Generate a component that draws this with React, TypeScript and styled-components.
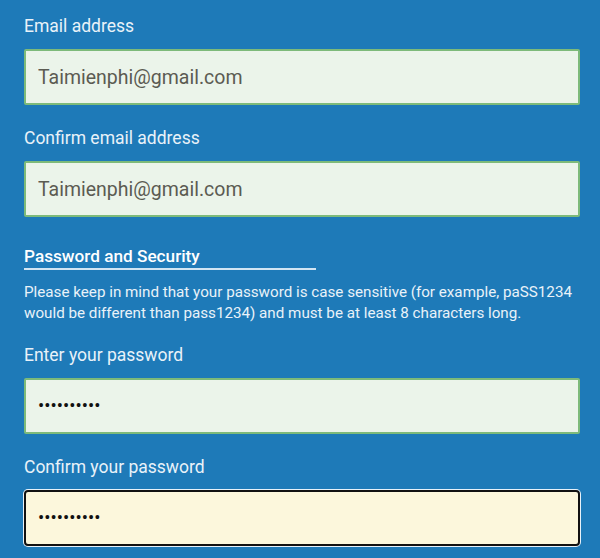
import React from "react";
import styled, { createGlobalStyle } from "styled-components";

const Global = createGlobalStyle`
  html, body { margin: 0; padding: 0; background: #1e7ab8; }
  body { font-family: Roboto, "Liberation Sans", sans-serif; }
`;

const Page = styled.div`
  width: 600px;
  height: 558px;
  overflow: hidden;
  background: #1e7ab8;
  padding: 14px 20px 0 24px;
  box-sizing: border-box;
  display: flex;
  flex-direction: column;
`;

const Field = styled.div`
  display: flex;
  flex-direction: column;
  margin-bottom: 21px;
`;

const Label = styled.label`
  font-size: 17.5px;
  font-weight: 400;
  line-height: 24px;
  color: #e9f2f9;
  margin-bottom: 11px;
`;

const Input = styled.input<{ $focused?: boolean }>`
  box-sizing: border-box;
  width: 556px;
  height: 56px;
  padding: 0 12px;
  font-family: Roboto, "Liberation Sans", sans-serif;
  font-weight: 400;
  font-size: 19.5px;
  color: #5b5b52;
  background: ${(p) => (p.$focused ? "#fcf7dc" : "#ebf4ea")};
  border: 2px solid ${(p) => (p.$focused ? "#111" : "#7dba7a")};
  border-radius: ${(p) => (p.$focused ? "4px" : "2px")};
  box-shadow: ${(p) => (p.$focused ? "0 0 0 1px #e8f2fa" : "none")};
  outline: none;
  &[type="password"] { color: #111; font-size: 18.5px; }
`;

const Section = styled.div`
  display: flex;
  flex-direction: column;
  margin-top: 7px;
  margin-bottom: 19px;
`;

const Heading = styled.h3`
  margin: 0;
  width: 292px;
  font-size: 17.2px;
  font-weight: 500;
  line-height: 22px;
  color: #fff;
  padding-bottom: 1px;
  border-bottom: 2px solid #d2e5f3;
`;

const Note = styled.p`
  margin: 12px 0 0;
  font-size: 15.2px;
  font-weight: 400;
  line-height: 21px;
  color: #e9f2f9;
`;

export default function App() {
  return (
    <>
      <Global />
      <Page>
        <Field>
          <Label>Email address</Label>
          <Input type="text" defaultValue="Taimienphi@gmail.com" />
        </Field>
        <Field>
          <Label>Confirm email address</Label>
          <Input type="text" defaultValue="Taimienphi@gmail.com" />
        </Field>
        <Section>
          <Heading>Password and Security</Heading>
          <Note>
            Please keep in mind that your password is case sensitive (for example, paSS1234
            would be different than pass1234) and must be at least 8 characters long.
          </Note>
        </Section>
        <Field>
          <Label>Enter your password</Label>
          <Input type="password" defaultValue="abcdefghij" />
        </Field>
        <Field>
          <Label>Confirm your password</Label>
          <Input type="password" defaultValue="abcdefghij" $focused />
        </Field>
      </Page>
    </>
  );
}
